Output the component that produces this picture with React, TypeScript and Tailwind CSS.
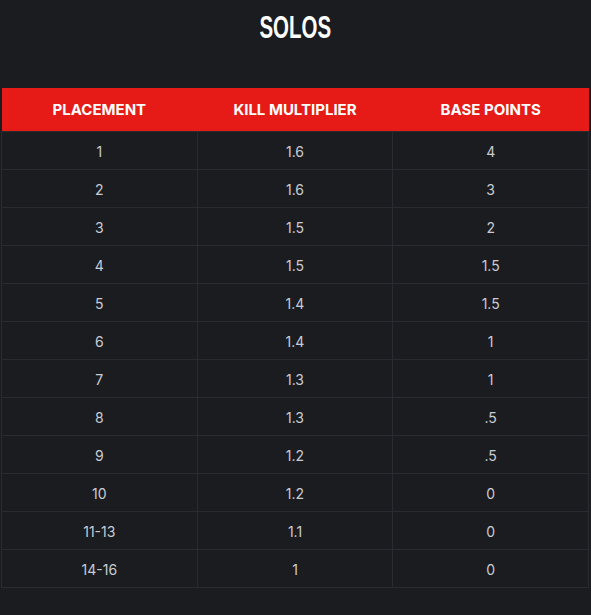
import React from 'react';

const rows = [
  ['1', '1.6', '4'],
  ['2', '1.6', '3'],
  ['3', '1.5', '2'],
  ['4', '1.5', '1.5'],
  ['5', '1.4', '1.5'],
  ['6', '1.4', '1'],
  ['7', '1.3', '1'],
  ['8', '1.3', '.5'],
  ['9', '1.2', '.5'],
  ['10', '1.2', '0'],
  ['11-13', '1.1', '0'],
  ['14-16', '1', '0'],
];

const App: React.FC = () => {
  return (
    <div className="min-h-[615px] w-[591px] bg-[#1b1c20] font-['Inter',sans-serif]">
      <div className="pt-[10px] text-center">
        {/* condensed display face isn't installed, so squeeze a plain sans */}
        <h1 className="inline-block scale-x-[0.66] font-['Liberation_Sans',sans-serif] text-[31px] font-bold leading-[36px] text-white">
          SOLOS
        </h1>
      </div>

      <table className="ml-px mt-[42px] w-[588px] table-fixed border-collapse">
        <thead>
          <tr className="h-[43px] bg-[#e61b17]">
            <th className="pt-px text-[15px] font-bold text-white">PLACEMENT</th>
            <th className="pt-px text-[15px] font-bold text-white">KILL MULTIPLIER</th>
            <th className="pt-px text-[15px] font-bold text-white">BASE POINTS</th>
          </tr>
        </thead>
        <tbody>
          {rows.map((row, i) => (
            <tr key={i} className="h-[38px]">
              {row.map((cell, j) => (
                <td
                  key={j}
                  className="border border-[#2a2b30] pt-[2px] text-center text-[14px] text-[#c9ccd3]"
                >
                  {cell}
                </td>
              ))}
            </tr>
          ))}
        </tbody>
      </table>
    </div>
  );
};

export default App;
